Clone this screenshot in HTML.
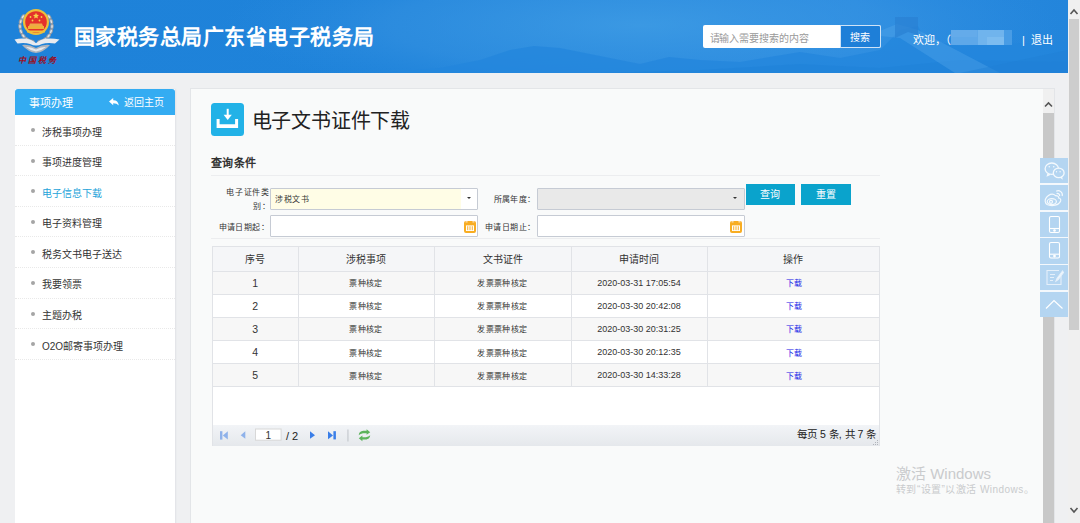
<!DOCTYPE html>
<html lang="zh-CN"><head><meta charset="utf-8">
<style>
*{margin:0;padding:0;box-sizing:border-box}
html,body{width:1080px;height:523px;overflow:hidden}
body{background:#eff0f2;font-family:"Liberation Sans",sans-serif;position:relative;color:#333}
.abs{position:absolute}
#hdr{left:0;top:0;width:1068px;height:73px;background:linear-gradient(90deg,#1e82d9 0%,#1f83da 40%,#2588dd 60%,#2a8be0 80%,#2385db 100%);overflow:hidden}
#title{left:74px;top:19.5px;font-size:21px;letter-spacing:0.49px;font-weight:bold;color:#fff;white-space:nowrap}
#search{left:703px;top:25px;width:178px;height:23px;background:#fff;border-radius:2px}
#search .ph{left:6.5px;top:4.5px;font-size:10px;letter-spacing:-0.1px;color:#999;white-space:nowrap}
#search .btn{left:137px;top:0;width:41px;height:23px;background:#1e7fd8;border:1px solid #cfe3f7;border-radius:0 2px 2px 0;color:#fff;font-size:10px;letter-spacing:0.3px;text-align:center;line-height:24px}
#welcome{left:913px;top:30.5px;font-size:11px;color:#fff;white-space:nowrap}
#name{left:951px;top:30px;width:61px;height:15px}
#logout{left:1022px;top:30.5px;font-size:11px;color:#fff;white-space:nowrap}
#osb{left:1068px;top:0;width:12px;height:523px;background:#f0f0f0}
#osb .th{left:1px;top:19px;width:10px;height:311px;background:#cdcdcd}
#side{left:15px;top:89px;width:160px;height:440px;background:#fff;box-shadow:1px 0 1.5px #e0e2e6}
#side .hd{left:0;top:0;width:160px;height:26px;background:#34acf2;border-radius:3px 3px 0 0;color:#fff;font-size:11px}
#side ul{position:absolute;left:0;top:26px;width:160px;list-style:none}
#side li{height:30.6px;border-bottom:1px dotted #e9e9e9;font-size:10px;color:#333;position:relative;line-height:30px;padding-top:2.5px;padding-left:27px;white-space:nowrap}
#side li:before{content:"";position:absolute;left:16px;top:13px;width:4px;height:4px;border-radius:50%;background:#a5a5a5}
#side li.on{color:#25a3d9}
#main{left:190px;top:88px;width:865px;height:440px;background:#f9fafa;border:1px solid #e3e5e8}
#pgicon{left:211px;top:103px;width:33px;height:32.5px;background:#22b2e7;border-radius:3.5px}
#pgtitle{left:251.5px;top:104.8px;font-size:20px;letter-spacing:-0.18px;color:#222;white-space:nowrap}
#qc{left:211px;top:154px;font-size:11px;letter-spacing:0.25px;font-weight:bold;color:#333;white-space:nowrap}
.hr{height:1px;background:#ecedef}
.lbl{font-size:8px;letter-spacing:0.4px;color:#333;white-space:nowrap;text-align:right}
.inp{border:1px solid #c6cbd4;background:#fff;border-radius:1px}
.sel1{background:linear-gradient(90deg,#fffde6 0,#fffde6 190px,#fff 190px)}
.sel2{background:#e9e9e9}
.arr{width:0;height:0;border-left:2.5px solid transparent;border-right:2.5px solid transparent;border-top:2.5px solid #333}
.btnq{background:#0aa3cc;color:#fff;font-size:10px;text-align:center;line-height:22.5px;text-indent:-1px}
#tbl{left:212px;top:246px;width:668px;height:200px;background:#fff;border:1px solid #e1e3e7}
#tbl table{border-collapse:collapse;table-layout:fixed;position:absolute;left:0;top:0;width:666px}
#tbl td,#tbl th{border-right:1px solid #e1e3e7;border-bottom:1px solid #e1e3e7;text-align:center;font-weight:normal;color:#333;white-space:nowrap;overflow:hidden}
#tbl th{height:24px;background:#f5f6f8;font-size:10px}
#tbl td{height:23.2px;font-size:8px;letter-spacing:0.45px}
#tbl tr.odd td{background:#f7f7f7}
#tbl td.n{font-size:10.5px;letter-spacing:0}
#tbl td.t{font-size:9px;letter-spacing:0}
#tbl td.dl{color:#1420e6;padding-left:2px}
#pager{left:0;top:177.5px;width:666px;height:21.5px;background:linear-gradient(#f2f4f7,#e5e8ec)}
#wm1{left:896px;top:461.5px;font-size:15px;color:#c9cbcd;white-space:nowrap}
#wm2{left:896px;top:480.5px;font-size:10px;letter-spacing:0.45px;color:#c9cbcd;white-space:nowrap}
#isb{left:1043px;top:89px;width:11px;height:440px;background:#f0f0f0}
#isb .th{left:0;top:24px;width:11px;height:420px;background:#c8c8c8}
.shr{left:1040px;width:28px;height:25.3px;background:#b4d5f1}
.shr svg{position:absolute;left:0;top:0}
</style></head><body>
<div id="hdr" class="abs">
  <svg class="abs" style="left:0;top:0" width="1068" height="73">
    <defs>
      <radialGradient id="glow" cx="640" cy="25" r="420" gradientUnits="userSpaceOnUse" gradientTransform="translate(640 25) scale(1 0.18) translate(-640 -25)">
        <stop offset="0" stop-color="#44a0e6" stop-opacity="0.7"/>
        <stop offset="0.6" stop-color="#3894e2" stop-opacity="0.5"/>
        <stop offset="1" stop-color="#2a8be0" stop-opacity="0"/>
      </radialGradient>
    </defs>
    <rect x="0" y="0" width="1068" height="73" fill="url(#glow)"/>
    <path d="M380 73 L440 68 L480 60 L510 50 L534 46 L560 48 L590 54 L640 64 L669 57 L700 60 L740 62 L800 52 L840 58 L880 50 L900 30 L918 26 L925 40 L960 46 L1000 44 L1068 42 L1068 73Z" fill="#2386dc" opacity="0.75"/>
    <path d="M600 73 L700 70 L800 64 L880 68 L960 60 L1068 62 L1068 73Z" fill="#1f82d9" opacity="0.6"/>
    <path d="M870 35 L897 24 L918 30 L1000 73 L955 73 L900 38Z" fill="#5aa8ea" opacity="0.35"/>
    <path d="M895 17 L918 17 L918 35 L908 32 L895 38Z" fill="#2a80d3" opacity="0.7"/>
    <path d="M960 73 L1068 50 L1068 73Z" fill="#1f7fd6" opacity="0.5"/>
    <!-- logo -->
    <g>
      <ellipse cx="22.9" cy="16.8" rx="1.8" ry="3" transform="rotate(215 22.9 16.8)" fill="#959ca6"/><ellipse cx="22.9" cy="16.8" rx="0.8" ry="1.8" transform="rotate(215 22.9 16.8)" fill="#dfe3e8"/><ellipse cx="20.7" cy="21.4" rx="1.8" ry="3" transform="rotate(197 20.7 21.4)" fill="#959ca6"/><ellipse cx="20.7" cy="21.4" rx="0.8" ry="1.8" transform="rotate(197 20.7 21.4)" fill="#dfe3e8"/><ellipse cx="20.0" cy="26.5" rx="1.8" ry="3" transform="rotate(178 20.0 26.5)" fill="#959ca6"/><ellipse cx="20.0" cy="26.5" rx="0.8" ry="1.8" transform="rotate(178 20.0 26.5)" fill="#dfe3e8"/><ellipse cx="21.0" cy="31.5" rx="1.8" ry="3" transform="rotate(160 21.0 31.5)" fill="#959ca6"/><ellipse cx="21.0" cy="31.5" rx="0.8" ry="1.8" transform="rotate(160 21.0 31.5)" fill="#dfe3e8"/><ellipse cx="23.4" cy="35.9" rx="1.8" ry="3" transform="rotate(142 23.4 35.9)" fill="#959ca6"/><ellipse cx="23.4" cy="35.9" rx="0.8" ry="1.8" transform="rotate(142 23.4 35.9)" fill="#dfe3e8"/><ellipse cx="27.2" cy="39.4" rx="1.8" ry="3" transform="rotate(123 27.2 39.4)" fill="#959ca6"/><ellipse cx="27.2" cy="39.4" rx="0.8" ry="1.8" transform="rotate(123 27.2 39.4)" fill="#dfe3e8"/><ellipse cx="31.9" cy="41.5" rx="1.8" ry="3" transform="rotate(105 31.9 41.5)" fill="#959ca6"/><ellipse cx="31.9" cy="41.5" rx="0.8" ry="1.8" transform="rotate(105 31.9 41.5)" fill="#dfe3e8"/><ellipse cx="49.1" cy="16.8" rx="1.8" ry="3" transform="rotate(325 49.1 16.8)" fill="#959ca6"/><ellipse cx="49.1" cy="16.8" rx="0.8" ry="1.8" transform="rotate(325 49.1 16.8)" fill="#dfe3e8"/><ellipse cx="51.3" cy="21.4" rx="1.8" ry="3" transform="rotate(343 51.3 21.4)" fill="#959ca6"/><ellipse cx="51.3" cy="21.4" rx="0.8" ry="1.8" transform="rotate(343 51.3 21.4)" fill="#dfe3e8"/><ellipse cx="52.0" cy="26.5" rx="1.8" ry="3" transform="rotate(362 52.0 26.5)" fill="#959ca6"/><ellipse cx="52.0" cy="26.5" rx="0.8" ry="1.8" transform="rotate(362 52.0 26.5)" fill="#dfe3e8"/><ellipse cx="51.0" cy="31.5" rx="1.8" ry="3" transform="rotate(380 51.0 31.5)" fill="#959ca6"/><ellipse cx="51.0" cy="31.5" rx="0.8" ry="1.8" transform="rotate(380 51.0 31.5)" fill="#dfe3e8"/><ellipse cx="48.6" cy="35.9" rx="1.8" ry="3" transform="rotate(398 48.6 35.9)" fill="#959ca6"/><ellipse cx="48.6" cy="35.9" rx="0.8" ry="1.8" transform="rotate(398 48.6 35.9)" fill="#dfe3e8"/><ellipse cx="44.8" cy="39.4" rx="1.8" ry="3" transform="rotate(417 44.8 39.4)" fill="#959ca6"/><ellipse cx="44.8" cy="39.4" rx="0.8" ry="1.8" transform="rotate(417 44.8 39.4)" fill="#dfe3e8"/><ellipse cx="40.1" cy="41.5" rx="1.8" ry="3" transform="rotate(435 40.1 41.5)" fill="#959ca6"/><ellipse cx="40.1" cy="41.5" rx="0.8" ry="1.8" transform="rotate(435 40.1 41.5)" fill="#dfe3e8"/>
      <circle cx="36" cy="22" r="13" fill="#eebf3a"/>
      <circle cx="36" cy="22" r="10.8" fill="#e4322b"/>
      <path d="M28 26 H44 V29 H28Z" fill="#eebf3a" opacity="0.9"/>
      <path d="M30 23.5 H42 L43 26 H29Z" fill="#f0c850" opacity="0.8"/>
      <path d="M27 30.5 H45 V32.5 H27Z" fill="#eebf3a"/>
      <path d="M36 12.8 l0.9 2 2.1 0.2 -1.6 1.4 0.5 2.1 -1.9 -1.1 -1.9 1.1 0.5 -2.1 -1.6 -1.4 2.1 -0.2Z" fill="#f7d04a"/>
      <circle cx="30.5" cy="17" r="0.9" fill="#f7d04a"/><circle cx="41.5" cy="17" r="0.9" fill="#f7d04a"/>
      <circle cx="32.5" cy="20.5" r="0.9" fill="#f7d04a"/><circle cx="39.5" cy="20.5" r="0.9" fill="#f7d04a"/>
      <path d="M14.5 39.5 Q22 37.5 30 39.5 L36 43 L42 39.5 Q50 37.5 59.5 39.5 L55 43.5 Q47 42.5 42 44 Q36 47 30 44 Q25 42.5 17.5 43.5Z" fill="#e9ebef"/>
      <path d="M22 45 Q29 44 36 48 Q43 44 50 45 Q44 52 36 53 Q28 52 22 45Z" fill="#aeb4bd"/>
      <path d="M26 47 Q31 46.5 36 49.5 Q41 46.5 46 47 Q41 51 36 51.5 Q31 51 26 47Z" fill="#e6e8ec"/>
      <text x="17.5" y="62.5" font-size="8" font-family="Liberation Serif" font-weight="bold" fill="#9a0e22" letter-spacing="2.2" font-style="italic">中国税务</text>
    </g>
  </svg>
  <div id="title" class="abs">国家税务总局广东省电子税务局</div>
  <div id="search" class="abs"><div class="ph abs">请输入需要搜索的内容</div><div class="btn abs">搜索</div></div>
  <div id="welcome" class="abs">欢迎，（</div>
  <div id="name" class="abs">
    <div class="abs" style="left:0;top:0;width:61px;height:15px;background:#4d9ee5;opacity:0.9"></div>
    <div class="abs" style="left:0;top:0;width:53px;height:15px;background:#5ea8e9"></div>
    <div class="abs" style="left:0;top:0;width:26px;height:7px;background:#64abea"></div>
    <div class="abs" style="left:27px;top:0;width:26px;height:15px;background:#70b4ed"></div>
    <div class="abs" style="left:36px;top:7px;width:17px;height:8px;background:#7cbcf0"></div>
  </div>
  <div id="logout" class="abs">| &nbsp;退出</div>
</div>
<div id="osb" class="abs"><div class="th abs"></div>
  <svg class="abs" style="left:0;top:0" width="12" height="523"><path d="M2.5 14 L6 10 L9.5 14" stroke="#555" stroke-width="1.6" fill="none"/><path d="M2.5 508 L6 512 L9.5 508" stroke="#555" stroke-width="1.6" fill="none"/></svg>
</div>
<div id="side" class="abs">
  <div class="hd abs"><span class="abs" style="left:13.5px;top:4.5px">事项办理</span>
    <svg class="abs" style="left:94px;top:8.5px" width="12" height="10"><path d="M0 3.6 L4.2 0 L4.2 2.2 Q9 2 9.8 7.5 Q8 5.3 4.2 5.2 L4.2 7.2Z" fill="#fff"/></svg>
    <span class="abs" style="left:108.5px;top:5px;font-size:10px">返回主页</span></div>
  <ul>
   <li>涉税事项办理</li><li>事项进度管理</li><li class="on">电子信息下载</li><li>电子资料管理</li><li>税务文书电子送达</li><li>我要领票</li><li>主题办税</li><li>O2O邮寄事项办理</li>
  </ul>
</div>
<div id="main" class="abs"></div>
<div id="pgicon" class="abs"><svg width="33" height="33"><path d="M15.7 5.8h2v7h-2z" fill="#fff"/><path d="M12.6 11.8 L20.8 11.8 L16.7 17Z" fill="#fff"/><path d="M5.6 16 H8.6 V21.2 H24.1 V16 H27.1 V25 H5.6Z" fill="#fff"/></svg></div>
<div id="pgtitle" class="abs">电子文书证件下载</div>
<div id="qc" class="abs">查询条件</div>
<div class="abs hr" style="left:211px;top:175px;width:669px"></div>
<div class="abs hr" style="left:211px;top:238px;width:669px"></div>
<div class="abs lbl" style="left:200px;top:186px;width:70px;line-height:14px"><span style="letter-spacing:0.8px">电子证件类</span><br>别：</div>
<div class="abs inp sel1" style="left:270px;top:188px;width:208px;height:22px"><span class="abs" style="left:4px;top:4px;font-size:8px;letter-spacing:0.6px;color:#333">涉税文书</span><div class="abs arr" style="left:196px;top:8px"></div></div>
<div class="abs lbl" style="left:210px;top:221px;width:59px">申请日期起：</div>
<div class="abs inp" style="left:270px;top:215px;width:208px;height:22px"></div>
<div class="abs lbl" style="left:470px;top:193px;width:65.5px">所属年度：</div>
<div class="abs inp sel2" style="left:537px;top:188px;width:208px;height:21.5px"><div class="abs arr" style="left:195px;top:8px"></div></div>
<div class="abs lbl" style="left:470px;top:221px;width:65.5px">申请日期止：</div>
<div class="abs inp" style="left:537px;top:215px;width:208px;height:22px"></div>
<div class="abs btnq" style="left:746px;top:184px;width:49px;height:21px">查询</div>
<div class="abs btnq" style="left:801px;top:184px;width:50px;height:21px">重置</div>
<svg class="abs" style="left:463.5px;top:220.8px" width="12" height="12"><rect x="0" y="0" width="12" height="12" rx="2" fill="#f8ad22"/><rect x="1.6" y="0" width="2" height="1.6" fill="#fcd69a"/><rect x="8.4" y="0" width="2" height="1.6" fill="#fcd69a"/><rect x="2" y="4.4" width="8" height="5.6" fill="#fff"/><rect x="3" y="5.2" width="1.3" height="4" fill="#f9c05a"/><rect x="5.35" y="5.2" width="1.3" height="4" fill="#f9c05a"/><rect x="7.7" y="5.2" width="1.3" height="4" fill="#f9c05a"/></svg>
<svg class="abs" style="left:730.2px;top:220.8px" width="12" height="12"><rect x="0" y="0" width="12" height="12" rx="2" fill="#f8ad22"/><rect x="1.6" y="0" width="2" height="1.6" fill="#fcd69a"/><rect x="8.4" y="0" width="2" height="1.6" fill="#fcd69a"/><rect x="2" y="4.4" width="8" height="5.6" fill="#fff"/><rect x="3" y="5.2" width="1.3" height="4" fill="#f9c05a"/><rect x="5.35" y="5.2" width="1.3" height="4" fill="#f9c05a"/><rect x="7.7" y="5.2" width="1.3" height="4" fill="#f9c05a"/></svg>
<div id="tbl" class="abs">
<table>
<colgroup><col style="width:85px"><col style="width:136px"><col style="width:137px"><col style="width:136px"><col style="width:172px"></colgroup>
<tr><th>序号</th><th>涉税事项</th><th>文书证件</th><th>申请时间</th><th style="border-right:0">操作</th></tr>
<tr class="odd"><td class="n">1</td><td>票种核定</td><td>发票票种核定</td><td class="t">2020-03-31 17:05:54</td><td class="dl" style="border-right:0">下载</td></tr>
<tr><td class="n">2</td><td>票种核定</td><td>发票票种核定</td><td class="t">2020-03-30 20:42:08</td><td class="dl" style="border-right:0">下载</td></tr>
<tr class="odd"><td class="n">3</td><td>票种核定</td><td>发票票种核定</td><td class="t">2020-03-30 20:31:25</td><td class="dl" style="border-right:0">下载</td></tr>
<tr><td class="n">4</td><td>票种核定</td><td>发票票种核定</td><td class="t">2020-03-30 20:12:35</td><td class="dl" style="border-right:0">下载</td></tr>
<tr class="odd"><td class="n">5</td><td>票种核定</td><td>发票票种核定</td><td class="t">2020-03-30 14:33:28</td><td class="dl" style="border-right:0">下载</td></tr>
</table>
<div id="pager" class="abs">
  <svg class="abs" style="left:-1px;top:0" width="200" height="22">
    <rect x="8" y="6.2" width="2.4" height="8.4" fill="#8fb2ea"/><path d="M10.8 10.4 L15.8 6.2 L15.8 14.6Z" fill="#8fb2ea"/>
    <path d="M28.7 10.2 L33.3 6.2 L33.3 13.8Z" fill="#8fb2ea"/>
    <rect x="43.5" y="4" width="25.6" height="11.2" fill="#fff" stroke="#d8d8d8" stroke-width="1"/>
    <path d="M98 6.2 L103 10.2 L98 13.8Z" fill="#3a7ee8"/>
    <path d="M116 6.2 L121 10.4 L116 14.2Z" fill="#3a7ee8"/><rect x="121.4" y="6.2" width="2.5" height="8.2" fill="#3a7ee8"/>
    <rect x="135.5" y="4.5" width="0.9" height="12" fill="#b9bdc4"/>
    <path d="M146.8 10.2 C147 7 149.5 5.8 152.5 5.8 L154.6 5.8 L154.6 4.2 L158.2 7.2 L154.6 9.8 L154.6 8.2 L152.5 8.2 C150.5 8.2 148.5 8.8 146.8 10.2Z" fill="#5cb35c"/>
    <path d="M158.2 10.2 C158 13.4 155.5 14.6 152.5 14.6 L150.4 14.6 L150.4 16.2 L146.8 13.2 L150.4 10.6 L150.4 12.2 L152.5 12.2 C154.5 12.2 156.5 11.6 158.2 10.2Z" fill="#5cb35c"/>
  </svg>
  <span class="abs" style="left:52.5px;top:5px;font-size:10px;color:#333">1</span>
  <span class="abs" style="left:73px;top:5px;font-size:11px;color:#222">/ 2</span>
  <svg class="abs" style="left:659px;top:14px" width="8" height="8" fill="#b0b4ba"><rect x="5" y="1" width="1" height="1"/><rect x="3" y="3" width="1" height="1"/><rect x="5" y="3" width="1" height="1"/><rect x="1" y="5" width="1" height="1"/><rect x="3" y="5" width="1" height="1"/><rect x="5" y="5" width="1" height="1"/></svg>
  <span class="abs" style="left:584px;top:1.5px;font-size:10.5px;color:#222;white-space:nowrap">每页 5 条, 共 7 条</span>
</div>
</div>
<div id="wm1" class="abs">激活 Windows</div>
<div id="wm2" class="abs">转到“设置”以激活 Windows。</div>
<div id="isb" class="abs"><div class="th abs"></div><svg class="abs" style="left:0;top:0" width="11" height="25"><path d="M2 17.5 L5.5 14 L9 17.5" stroke="#555" stroke-width="1.6" fill="none"/></svg></div>
<div class="abs" style="left:1040px;top:158px;width:28px;height:159px;background:#f4f8fc"></div>
<div class="abs shr" style="top:158px"><svg width="28" height="26" fill="none" stroke="#f4f9fd" stroke-width="1.3"><ellipse cx="11.8" cy="10.7" rx="6.7" ry="5.7"/><path d="M8 15.8 L7.5 17.5 L10 16.3"/><ellipse cx="18.7" cy="14.9" rx="5.4" ry="4.7" fill="#b4d5f1"/><path d="M20.5 19.3 L21.8 20.2 L21.4 18.6"/><circle cx="9.3" cy="8.8" r="0.8" fill="#f4f9fd" stroke="none"/><circle cx="13.7" cy="8.8" r="0.8" fill="#f4f9fd" stroke="none"/><circle cx="16.5" cy="13.7" r="0.7" fill="#f4f9fd" stroke="none"/><circle cx="20.1" cy="13.7" r="0.7" fill="#f4f9fd" stroke="none"/></svg></div>
<div class="abs shr" style="top:184.8px"><svg width="28" height="26" fill="none" stroke="#f4f9fd" stroke-width="1.2"><path d="M15.5 10.6 Q12.5 7.8 8.5 10.5 Q4.8 13.3 5.2 16.5 Q5.8 20.6 12 20.6 Q19 20.4 20.6 16 Q21.3 13.5 18.6 13 Q19.3 11 15.5 10.6Z"/><ellipse cx="11.8" cy="16.6" rx="4.6" ry="3"/><circle cx="11" cy="16.8" r="1.5"/><path d="M16.2 6.2 A4.2 4.2 0 0 1 22.2 11"/><path d="M16.6 8.6 A2.2 2.2 0 0 1 19.6 11.2"/></svg></div>
<div class="abs shr" style="top:211.6px"><svg width="28" height="26" fill="none" stroke="#fff" stroke-width="1.1"><rect x="9.5" y="4.5" width="10" height="16" rx="1.5"/><path d="M9.5 16.5 H19.5"/><circle cx="14.5" cy="18.5" r="0.8" fill="#fff"/></svg></div>
<div class="abs shr" style="top:238.4px"><svg width="28" height="26" fill="none" stroke="#fff" stroke-width="1.1"><rect x="9.5" y="4.5" width="10" height="15.5" rx="1.5"/><path d="M9.5 16.2 H19.5"/><circle cx="14.5" cy="18.1" r="0.8" fill="#fff"/></svg></div>
<div class="abs shr" style="top:265.2px"><svg width="28" height="26" fill="none" stroke="#eef5fc" stroke-width="1.1" opacity="0.85"><path d="M19 5.5 H7 V19.5 H21 V11"/><path d="M10 9.5 H15 M10 12.5 H14 M10 15.5 H13"/><path d="M22.5 6 L17 13.5 L16 16 L18.2 14.5 L23.5 7.5Z" fill="#fff"/></svg></div>
<div class="abs shr" style="top:292px"><svg width="28" height="26" fill="none" stroke="#fff" stroke-width="1.2"><path d="M6 16.5 L14 8.5 L22.5 16.5"/></svg></div>
</body></html>
